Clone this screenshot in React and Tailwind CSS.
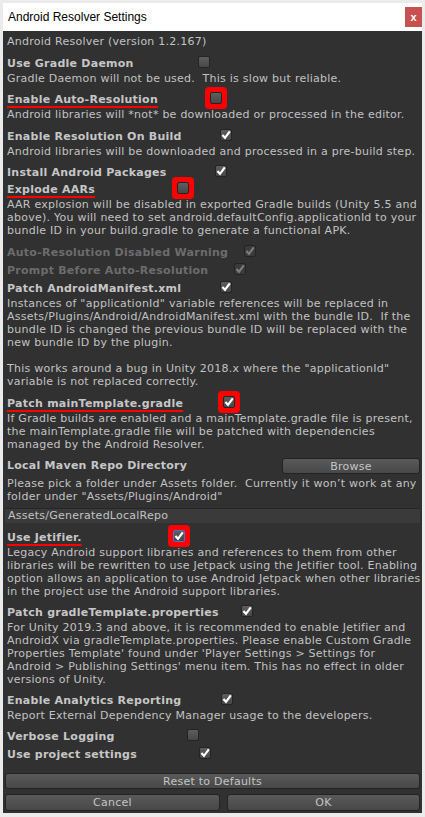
import React from 'react';

// Unity-style editor checkbox
function Toggle({ on, off, blue, mark }) {
  return (
    <span className="relative inline-flex shrink-0 w-[12px] h-[12px]">
      {mark && <span className="absolute -inset-[5px] rounded-[4px] bg-[#ff0000]" />}
      <span
        className={`relative flex items-center justify-center w-[12px] h-[12px] rounded-[2px] border ${
          blue ? 'border-[#4d6fd6]' : 'border-[#242424]'
        } ${off ? 'bg-[#3a3a3a]' : 'bg-linear-to-b from-[#5e5e5e] to-[#474747]'}`}
      >
        {on && (
          <svg width="10" height="10" viewBox="0 0 10 10" fill="none">
            <path
              d="M1.4 5 L4 7.8 L8.8 1.4"
              stroke={off ? '#7c7c7c' : '#ffffff'}
              strokeWidth="2.2"
            />
          </svg>
        )}
      </span>
    </span>
  );
}

function Row({ label, w, on, off, blue, mark, gap }) {
  return (
    <div className={`flex items-start h-[16px] ${gap}`}>
      <span
        className={`${w} shrink-0 pl-[2px] font-bold text-[11px] leading-[16px] whitespace-pre ${
          off ? 'text-[#6c6c6c]' : 'text-[#c6c6c6]'
        }`}
      >
        {mark ? (
          <span className="underline decoration-[#ff0000] decoration-2 underline-offset-[3px]">{label}</span>
        ) : (
          label
        )}
      </span>
      <Toggle on={on} off={off} blue={blue} mark={mark} />
    </div>
  );
}

function Desc({ lines, gap = '' }) {
  return (
    <div className={`pl-[2px] text-[11px] text-[#c2c2c2] ${gap}`}>
      {lines.map((l, i) => (
        <div key={i} className="h-[13px] leading-[13px] whitespace-pre">
          {l}
        </div>
      ))}
    </div>
  );
}

function Button({ children, className }) {
  return (
    <div
      className={`flex items-center justify-center h-[16px] rounded-[3px] border border-[#232323] bg-linear-to-b from-[#595959] to-[#484848] text-[11px] text-[#c4c4c4] leading-none ${className}`}
    >
      {children}
    </div>
  );
}

export default function App() {
  return (
    <div className="w-[425px] h-[817px] bg-[#ebebeb] p-[3px] pb-[4px] font-['DejaVu_Sans',sans-serif]">
      <div className="flex flex-col h-full">
        {/* title bar */}
        <div className="flex items-center justify-between h-[28px] bg-white pl-[5px]">
          <span className="text-[12px] text-black font-['Liberation_Sans',sans-serif]">Android Resolver Settings</span>
          <span className="flex items-center justify-center w-[17px] h-[20px] mt-[4px] self-start bg-[#c75050] text-white text-[11px] font-bold font-['Liberation_Sans',sans-serif]">
            x
          </span>
        </div>

        {/* settings panel */}
        <div className="flex-1 flex flex-col bg-[#313131] px-[2px] pt-[4px] tracking-[0.25px]">
          <Desc lines={['Android Resolver (version 1.2.167)']} />

          <Row label="Use Gradle Daemon" w="w-[193px]" gap="mt-[8px]" />
          <Desc lines={['Gradle Daemon will not be used.  This is slow but reliable.']} />

          <Row label="Enable Auto-Resolution" w="w-[205px]" gap="mt-[7px]" mark />
          <Desc lines={['Android libraries will *not* be downloaded or processed in the editor.']} />

          <Row label="Enable Resolution On Build" w="w-[215px]" gap="mt-[8px]" on />
          <Desc lines={['Android libraries will be downloaded and processed in a pre-build step.']} />

          <Row label="Install Android Packages" w="w-[210px]" gap="mt-[7px]" on />
          <Row label="Explode AARs" w="w-[172px]" gap="mt-[1px]" mark />
          <Desc
            lines={[
              'AAR explosion will be disabled in exported Gradle builds (Unity 5.5 and',
              'above). You will need to set android.defaultConfig.applicationId to your',
              'bundle ID in your build.gradle to generate a functional APK.',
            ]}
          />

          <Row label="Auto-Resolution Disabled Warning" w="w-[239px]" gap="mt-[8px]" on off />
          <Row label="Prompt Before Auto-Resolution" w="w-[229px]" gap="mt-[2px]" on off />
          <Row label="Patch AndroidManifest.xml" w="w-[215px]" gap="mt-[2px]" on />
          <Desc
            lines={[
              'Instances of "applicationId" variable references will be replaced in',
              'Assets/Plugins/Android/AndroidManifest.xml with the bundle ID.  If the',
              'bundle ID is changed the previous bundle ID will be replaced with the',
              'new bundle ID by the plugin.',
              ' ',
              'This works around a bug in Unity 2018.x where the "applicationId"',
              'variable is not replaced correctly.',
            ]}
          />

          <Row label="Patch mainTemplate.gradle" w="w-[218px]" gap="mt-[8px]" on mark />
          <Desc
            lines={[
              'If Gradle builds are enabled and a mainTemplate.gradle file is present,',
              'the mainTemplate.gradle file will be patched with dependencies',
              'managed by the Android Resolver.',
            ]}
          />

          <div className="flex items-start justify-between h-[16px] mt-[7px]">
            <span className="pl-[2px] font-bold text-[11px] leading-[16px] text-[#c6c6c6]">Local Maven Repo Directory</span>
            <Button className="w-[138px]">Browse</Button>
          </div>
          <Desc
            gap="mt-[3px]"
            lines={[
              'Please pick a folder under Assets folder.  Currently it won\u2019t work at any',
              'folder under "Assets/Plugins/Android"',
            ]}
          />
          <div className="mt-[5px] h-[15px] flex items-center pl-[3px] bg-[#3a3a3a] border-t border-[#262626] text-[11px] text-[#c2c2c2]">
            Assets/GeneratedLocalRepo
          </div>

          <Row label="Use Jetifier." w="w-[168px]" gap="mt-[7px]" on blue mark />
          <Desc
            lines={[
              'Legacy Android support libraries and references to them from other',
              'libraries will be rewritten to use Jetpack using the Jetifier tool. Enabling',
              'option allows an application to use Android Jetpack when other libraries',
              'in the project use the Android support libraries.',
            ]}
          />

          <Row label="Patch gradleTemplate.properties" w="w-[236px]" gap="mt-[7px]" on />
          <Desc
            lines={[
              'For Unity 2019.3 and above, it is recommended to enable Jetifier and',
              'AndroidX via gradleTemplate.properties. Please enable Custom Gradle',
              "Properties Template' found under 'Player Settings > Settings for",
              "Android > Publishing Settings' menu item. This has no effect in older",
              'versions of Unity.',
            ]}
          />

          <Row label="Enable Analytics Reporting" w="w-[216px]" gap="mt-[7px]" on />
          <Desc lines={['Report External Dependency Manager usage to the developers.']} />

          <Row label="Verbose Logging" w="w-[182px]" gap="mt-[7px]" />
          <Row label="Use project settings" w="w-[194px]" gap="mt-[2px]" on />

          <Button className="mt-[10px]">Reset to Defaults</Button>
          <div className="flex gap-[7px] mt-[5px]">
            <Button className="w-[215px] h-[17px]">Cancel</Button>
            <Button className="flex-1 h-[17px]">OK</Button>
          </div>
        </div>
      </div>
    </div>
  );
}
